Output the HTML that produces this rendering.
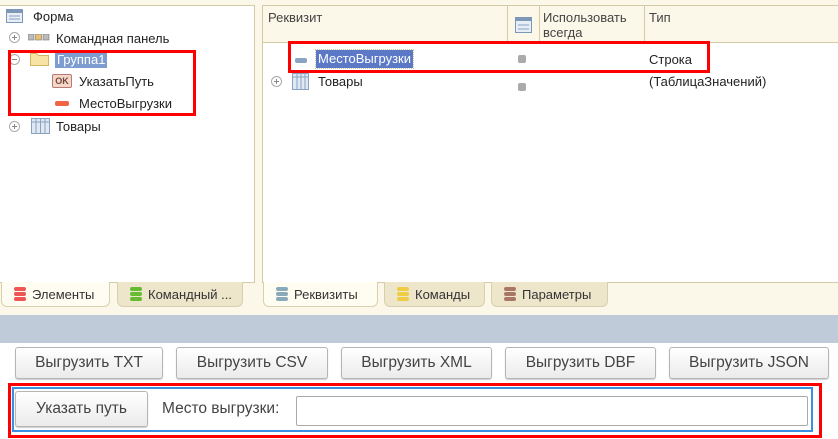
<!DOCTYPE html>
<html><head><meta charset="utf-8"><style>
*{box-sizing:border-box;margin:0;padding:0}
body{width:838px;height:439px;position:relative;overflow:hidden;background:#fff;font-family:"Liberation Sans",sans-serif;font-size:13px;color:#222}
.a{position:absolute}
.top{left:0;top:0;width:838px;height:315px;background:#fbf8e9}
.pan{background:#fff;border:1px solid #d4cba6}
.t{position:absolute;white-space:nowrap}
.tab{position:absolute;top:282px;height:25px;border:1px solid #d8d0ad;border-top:none;border-radius:0 0 6px 6px;background:#ede6cb;font-size:13px;padding:5px 0 0 30px;color:#333}
.tab.on{background:#fffdf2}
.st{position:absolute;left:12px;top:5px;width:12px;height:14px}
.st i{display:block;height:4px;margin-bottom:1px;border-radius:2px}
.btn{position:absolute;top:347px;height:32px;border:1px solid #b5b5b5;border-radius:3px;background:linear-gradient(#fff,#ebebeb);font-size:15.5px;color:#444;text-align:center;line-height:30px;box-shadow:0 1px 1px #ccc}
.pl{position:absolute;width:11px;height:11px;border:1px solid #aaa;border-radius:50%;background:#fff}
.pl:before{content:"";position:absolute;left:2px;top:4px;width:5px;height:1px;background:#888}
.pl.p:after{content:"";position:absolute;left:4px;top:2px;width:1px;height:5px;background:#888}
</style></head><body>
<div class="a top"></div>
<div class="a pan" style="left:-1px;top:5px;width:256px;height:278px"></div>
<div class="a pan" style="left:262px;top:5px;width:580px;height:278px"></div>
<svg class="a" style="left:6px;top:9px" width="18" height="15"><rect x="0.5" y="0.5" width="16" height="13" fill="#e8eef5" stroke="#7d97b7"/><rect x="1" y="1" width="15" height="3" fill="#7d97b7"/><rect x="3" y="6" width="11" height="2" fill="#b8c8dc"/><rect x="3" y="9" width="11" height="2" fill="#b8c8dc"/></svg>
<div class="t" style="left:33px;top:9px">Форма</div>
<div class="pl p" style="top:32px;left:9px"></div>
<svg class="a" style="left:28px;top:34px" width="22" height="7"><rect x="0" y="0" width="6" height="6" fill="#bbb" stroke="#777" stroke-width=".6"/><rect x="7.5" y="0" width="6" height="6" fill="#e9c070" stroke="#777" stroke-width=".6"/><rect x="15" y="0" width="6" height="6" fill="#bbb" stroke="#777" stroke-width=".6"/></svg>
<div class="t" style="left:56px;top:31px">Командная панель</div>
<div class="pl" style="top:54px;left:9px"></div>
<svg class="a" style="left:30px;top:51px" width="20" height="15"><path d="M0.5 2.5h6l2 2h10v10h-18z" fill="#f7e3a3" stroke="#d5b660"/></svg>
<div class="t" style="left:55px;top:51px;background:#7d9ccf;color:#fff;padding:1px 2px;height:17px">Группа1</div>
<div class="t" style="left:52px;top:74px;width:20px;height:14px;background:#f3d9c5;border:1px solid #b77;border-radius:2px;font-size:9px;font-weight:bold;color:#744;text-align:center;line-height:12px">OK</div>
<div class="t" style="left:79px;top:74px">УказатьПуть</div>
<div class="t" style="left:55px;top:101px;width:14px;height:5px;background:#e64;border-radius:2px"></div>
<div class="t" style="left:79px;top:96px">МестоВыгрузки</div>
<div class="a" style="left:8px;top:50px;width:188px;height:66px;border:3px solid #f00"></div>
<div class="pl p" style="top:121px;left:9px"></div>
<svg class="a" style="left:31px;top:118px" width="20" height="16"><rect x="0.5" y="0.5" width="18" height="15" fill="#dfe8f3" stroke="#8aa3c2"/><path d="M5 1v14M9.5 1v14M14 1v14M1 4h18" stroke="#8aa3c2"/></svg>
<div class="t" style="left:56px;top:119px">Товары</div>
<div class="a" style="left:263px;top:6px;width:575px;height:37px;background:#fbf8e9;border-bottom:1px solid #d4cba6"></div>
<div class="a" style="left:507px;top:6px;width:1px;height:37px;background:#d4cba6"></div>
<div class="a" style="left:539px;top:6px;width:1px;height:37px;background:#d4cba6"></div>
<div class="a" style="left:644px;top:6px;width:1px;height:37px;background:#d4cba6"></div>
<div class="t" style="left:268px;top:10px;color:#444">Реквизит</div>
<svg class="a" style="left:515px;top:17px" width="18" height="17"><rect x="0.5" y="0.5" width="16" height="15" fill="#e8eef5" stroke="#7d97b7"/><rect x="1" y="1" width="15" height="3" fill="#7d97b7"/><rect x="3" y="7" width="11" height="2" fill="#b8c8dc"/><rect x="3" y="11" width="11" height="2" fill="#b8c8dc"/></svg>
<div class="t" style="left:543px;top:10px;color:#444;line-height:15px">Использовать<br>всегда</div>
<div class="t" style="left:649px;top:10px;color:#444">Тип</div>
<div class="t" style="left:295px;top:58px;width:12px;height:5px;background:#8aa3c2;border-radius:2px"></div>
<div class="t" style="left:316px;top:50px;background:#5b79c7;color:#fff;padding:1px 2px;height:18px;outline:1px dotted #cc9">МестоВыгрузки</div>
<div class="t" style="left:518px;top:55px;width:8px;height:8px;background:#aaa;border-radius:2px"></div>
<div class="t" style="left:649px;top:52px">Строка</div>
<div class="pl p" style="left:271px;top:76px"></div>
<svg class="a" style="left:292px;top:73px" width="18" height="17"><rect x="0.5" y="0.5" width="16" height="16" fill="#dfe8f3" stroke="#8aa3c2"/><path d="M5 1v15M9 1v15M13 1v15M1 4h16" stroke="#8aa3c2"/></svg>
<div class="t" style="left:318px;top:74px">Товары</div>
<div class="t" style="left:518px;top:83px;width:8px;height:8px;background:#aaa;border-radius:2px"></div>
<div class="t" style="left:649px;top:74px">(ТаблицаЗначений)</div>
<div class="a" style="left:288px;top:41px;width:422px;height:32px;border:3px solid #f00"></div>
<div class="tab on" style="left:1px;width:109px"><span class="st"><i style="background:#e55"></i><i style="background:#e55"></i><i style="background:#e55"></i></span>Элементы</div>
<div class="tab" style="left:117px;width:126px"><span class="st"><i style="background:#6b3"></i><i style="background:#6b3"></i><i style="background:#6b3"></i></span>Командный ...</div>
<div class="tab on" style="left:263px;width:115px"><span class="st"><i style="background:#8ab"></i><i style="background:#8ab"></i><i style="background:#8ab"></i></span>Реквизиты</div>
<div class="tab" style="left:384px;width:101px"><span class="st"><i style="background:#ec4"></i><i style="background:#ec4"></i><i style="background:#ec4"></i></span>Команды</div>
<div class="tab" style="left:491px;width:117px"><span class="st"><i style="background:#a76"></i><i style="background:#a76"></i><i style="background:#a76"></i></span>Параметры</div>
<div class="a" style="left:0;top:315px;width:838px;height:28px;background:#bfcbd8"></div>
<div class="btn" style="left:15px;width:148px">Выгрузить TXT</div>
<div class="btn" style="left:176px;width:152px">Выгрузить CSV</div>
<div class="btn" style="left:341px;width:151px">Выгрузить XML</div>
<div class="btn" style="left:505px;width:151px">Выгрузить DBF</div>
<div class="btn" style="left:669px;width:160px">Выгрузить JSON</div>
<div class="a" style="left:8px;top:383px;width:814px;height:55px;border:3px solid #f00"></div>
<div class="a" style="left:12px;top:387px;width:801px;height:45px;border:2px solid #3a8fe0"></div>
<div class="btn" style="left:15px;top:391px;width:133px;height:36px;line-height:34px">Указать путь</div>
<div class="t" style="left:162px;top:400px;font-size:15.5px;color:#444">Место выгрузки:</div>
<div class="a" style="left:296px;top:396px;width:512px;height:30px;border:1px solid #aaa;border-radius:2px;background:#fff"></div>
</body></html>
